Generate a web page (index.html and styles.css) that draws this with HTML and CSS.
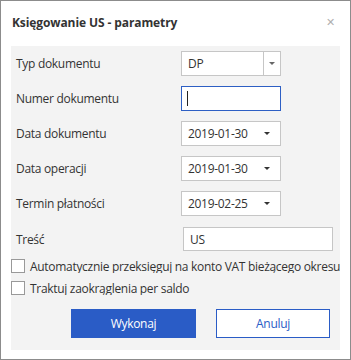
FILE: index.html
```html
<!DOCTYPE html>
<html lang="pl">
<head>
    <meta charset="UTF-8">
    <meta name="viewport" content="width=device-width, initial-scale=1.0">
    <title>Księgowanie US - parametry</title>
    <link rel="stylesheet" href="styles.css">
</head>
<body>
    <div class="dialog">
        <div class="dialog-header">
            <h1>Księgowanie US - parametry</h1>
            <span class="close-btn">&#x2715;</span>
        </div>
        <div class="panel">
            <div class="form-grid">
                <label>Typ dokumentu</label>
                <div class="combo">
                    <span class="value">DP</span>
                    <span class="combo-btn"><span class="arrow grey"></span></span>
                </div>

                <label>Numer dokumentu</label>
                <div class="text-input focused"><span class="caret"></span></div>

                <label>Data dokumentu</label>
                <div class="date-input"><span class="value">2019-01-30</span><span class="arrow"></span></div>

                <label>Data operacji</label>
                <div class="date-input"><span class="value">2019-01-30</span><span class="arrow"></span></div>

                <label>Termin płatności</label>
                <div class="date-input"><span class="value">2019-02-25</span><span class="arrow"></span></div>
            </div>

            <div class="tresc-row">
                <label>Treść</label>
                <div class="text-input wide"><span class="value">US</span></div>
            </div>

            <div class="check-row"><span class="checkbox"></span><span>Automatycznie przeksięguj na konto VAT bieżącego okresu</span></div>
            <div class="check-row"><span class="checkbox"></span><span>Traktuj zaokrąglenia per saldo</span></div>

            <div class="buttons">
                <button class="btn primary">Wykonaj</button>
                <button class="btn secondary">Anuluj</button>
            </div>
        </div>
    </div>
</body>
</html>
```

FILE: styles.css
```css
* {
    margin: 0;
    padding: 0;
    box-sizing: border-box;
    font-family: 'Segoe UI', 'Open Sans', sans-serif;
}

body {
    background: white;
    color: #333;
    font-size: 12px;
    letter-spacing: -0.3px;
}

.dialog {
    width: 351px;
    height: 360px;
    border: 1px solid #8c8c8c;
    background: white;
    display: flex;
    flex-direction: column;
}

.dialog-header {
    height: 45px;
    display: flex;
    align-items: center;
    justify-content: space-between;
    padding: 0 15px 0 11px;
}

.dialog-header h1 {
    font-size: 12px;
    font-weight: bold;
    letter-spacing: -0.1px;
    color: #333;
    margin-top: -2px;
}

.close-btn {
    color: #b0b0b0;
    font-size: 11px;
    margin-top: -4px;
}

.panel {
    margin: 0 10px 9px 10px;
    flex: 1;
    background: #f3f3f3;
    padding: 5px 0 0 5px;
}

.form-grid {
    display: grid;
    grid-template-columns: 165px 100px;
    grid-auto-rows: 25px;
    row-gap: 10px;
    align-items: center;
}

label {
    white-space: nowrap;
}

.combo, .text-input, .date-input {
    height: 25px;
    background: white;
    border: 1px solid #c6c6c6;
    display: flex;
    align-items: center;
}

.value {
    padding-left: 6px;
    flex: 1;
}

.combo-btn {
    width: 17px;
    height: 100%;
    border-left: 1px solid #c6c6c6;
    display: flex;
    align-items: center;
    justify-content: center;
}

.arrow {
    width: 0;
    height: 0;
    border-left: 3px solid transparent;
    border-right: 3px solid transparent;
    border-top: 3px solid #333;
    margin-right: 10px;
}

.combo-btn .arrow {
    margin-right: 0;
}

.arrow.grey {
    border-top-color: #666;
}

.text-input.focused {
    border-color: #2d5fc4;
}

.caret {
    width: 1px;
    height: 15px;
    background: #222;
    margin-left: 5px;
}

.tresc-row {
    display: grid;
    grid-template-columns: 167px 150px;
    align-items: center;
    margin-top: 11px;
}

.text-input.wide {
    height: 24px;
}

.check-row {
    display: flex;
    align-items: center;
    gap: 5px;
    margin-left: -5px;
    white-space: nowrap;
    height: 14px;
    margin-top: 8px;
    overflow: hidden;
}

.check-row + .check-row {
    margin-top: 8px;
}

.checkbox {
    width: 14px;
    height: 14px;
    border: 1px solid #999;
    background: white;
    flex-shrink: 0;
}

.buttons {
    display: flex;
    gap: 20px;
    margin-top: 14px;
    padding-left: 55px;
}

.btn {
    height: 29px;
    font-size: 12px;
    letter-spacing: -0.3px;
    cursor: pointer;
}

.primary {
    width: 125px;
    background: #2a5cc6;
    color: white;
    border: 1px solid #2a5cc6;
}

.secondary {
    width: 114px;
    background: white;
    color: #2a5cc6;
    border: 1px solid #2a5cc6;
}
```
